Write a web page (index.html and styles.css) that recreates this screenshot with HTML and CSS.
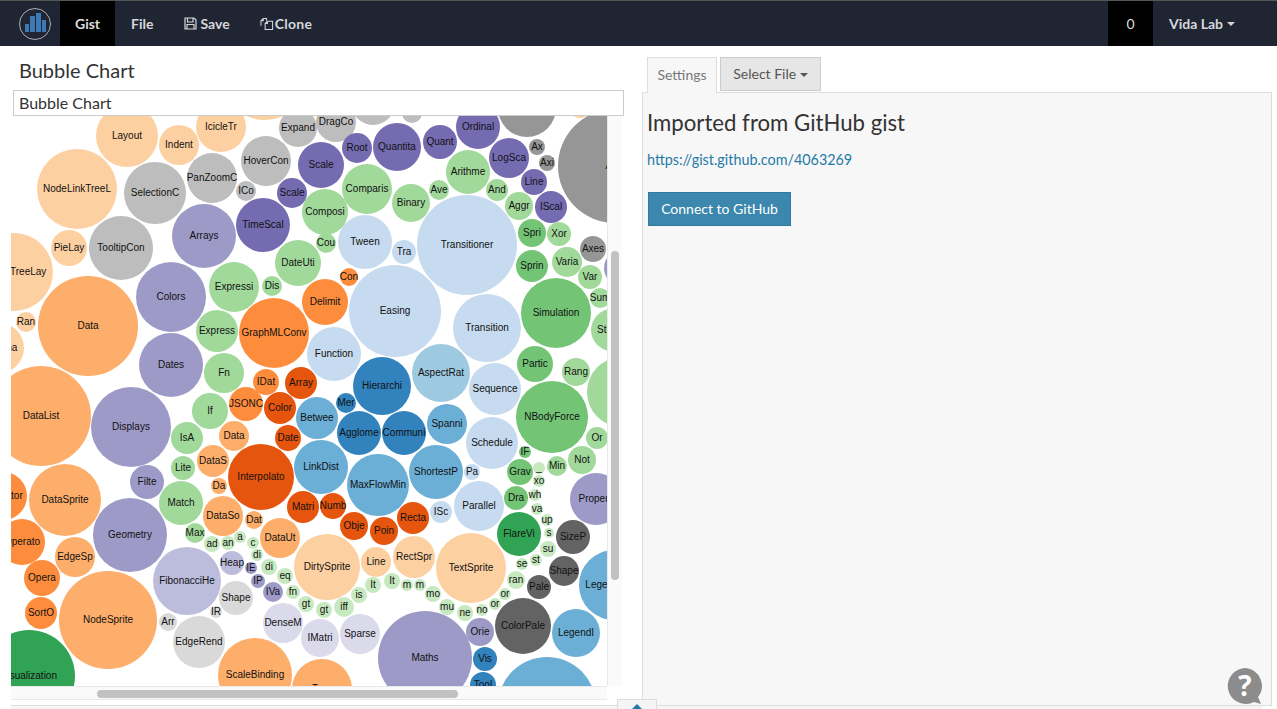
FILE: index.html
```html
<!DOCTYPE html>
<html lang="en">
<head>
    <meta charset="UTF-8">
    <title>Bubble Chart</title>
    <link rel="stylesheet" href="styles.css">
</head>
<body>

<nav class="navbar">
    <a class="logo" href="#">
        <svg width="34" height="34" viewBox="0 0 34 34">
            <circle cx="17" cy="17" r="15.5" fill="none" stroke="#a9adb3" stroke-width="1"></circle>
            <rect x="7" y="17" width="4" height="8" fill="#3d7ab5"></rect>
            <rect x="12" y="9" width="5" height="16" fill="#3d7ab5"></rect>
            <rect x="18" y="6" width="5" height="19" fill="#3d7ab5"></rect>
            <rect x="24" y="13" width="4" height="12" fill="#3d7ab5"></rect>
        </svg>
    </a>
    <a class="nav-item active" href="#">Gist</a>
    <a class="nav-item" href="#">File</a>
    <a class="nav-item" href="#">
        <svg class="nav-icon" width="13" height="13" viewBox="0 0 13 13">
            <path d="M1 1h9l2 2v9H1z M3.5 1.5v3.5h5.5V1.5 M3 12V7.5h7V12" fill="none" stroke="#d5d7da" stroke-width="1.2"></path>
        </svg>Save
    </a>
    <a class="nav-item clone" href="#">
        <svg class="nav-icon clone-icon" width="14" height="14" viewBox="0 0 15 14">
            <path d="M1 9V3.5L3.5 1H7v2.5 M1 3.5h2.5V1 M5.5 13V6.5L8 4h5.5v9z M5.5 6.5H8V4" fill="none" stroke="#d5d7da" stroke-width="1.1"></path>
        </svg>Clone
    </a>
    <div class="nav-right">
        <span class="counter">0</span>
        <a class="user-menu" href="#">Vida Lab <span class="caret"></span></a>
    </div>
</nav>

<div class="main">
    <div class="left-col">
        <h3 class="title">Bubble Chart</h3>
        <input class="title-input" type="text" value="Bubble Chart">
        <div class="chart-area">
            <svg id="chart" class="chart" width="596" height="570" viewBox="11 116 596 570"></svg>
            <div class="vscroll"><div class="vthumb"></div></div>
            <div class="hscroll"><div class="hthumb"></div></div>
        </div>
    </div>
    <div class="right-col">
        <div class="tabs">
            <a class="tab" href="#">Settings</a>
            <button class="select-file">Select File <span class="caret"></span></button>
        </div>
        <div class="panel">
            <h3 class="panel-title">Imported from GitHub gist</h3>
            <p class="panel-link"><a href="#">https://gist.github.com/4063269</a></p>
            <button class="connect">Connect to GitHub</button>
        </div>
    </div>
</div>

<div class="console-bar">
    <div class="console-tab"><span class="caret-up"></span></div>
</div>

<div class="help">
    <svg width="40" height="40" viewBox="0 0 40 40">
        <path d="M20 2a18 18 0 1 0 8 34l7 2-3-7A18 18 0 0 0 20 2z" fill="#8c8c8c"></path>
    </svg>
    <span class="help-mark">?</span>
</div>

<script src="app.js"></script>
</body>
</html>
```

FILE: styles.css
```css
html, body {
    height: 100%;
}
body {
    font-family: Lato, "Open Sans", sans-serif;
    margin: 0;
    background-color: #fff;
    color: #333;
    height: 709px;
    overflow: hidden;
    position: relative;
}
a {
    text-decoration: none;
}

/* top bar */
.navbar {
    display: flex;
    height: 45px;
    background-color: #1f2533;
    border-top: 1px solid #555;
    font-size: 14px;
    font-weight: 700;
}
.logo {
    width: 60px;
    display: flex;
    align-items: center;
    padding-left: 18px;
    box-sizing: border-box;
}
.nav-item {
    display: flex;
    align-items: center;
    padding: 0 15px 0 16px;
    color: #d5d7da;
}
.nav-item.active {
    background-color: #000;
    padding: 0 15px;
    color: #ddd;
}
.nav-item.clone {
    padding-left: 15px;
    letter-spacing: 0.3px;
}
.nav-icon {
    margin-right: 3px;
}
.clone-icon {
    margin-right: 1px;
}
.nav-right {
    margin-left: auto;
    display: flex;
    font-weight: 400;
}
.counter {
    width: 45px;
    background-color: #000;
    color: #ddd;
    display: flex;
    align-items: center;
    justify-content: center;
}
.user-menu {
    display: flex;
    align-items: center;
    gap: 4px;
    width: 124px;
    padding-left: 16px;
    box-sizing: border-box;
    color: #d5d7da;
    font-weight: 700;
}
.caret {
    display: inline-block;
    border-top: 4px solid currentColor;
    border-left: 4px solid transparent;
    border-right: 4px solid transparent;
    vertical-align: middle;
}

/* main columns */
.main {
    display: flex;
    height: 659px;
}
.left-col {
    width: 642px;
    flex-shrink: 0;
    padding-left: 11px;
    box-sizing: border-box;
}
.title {
    font-size: 20px;
    font-weight: 400;
    line-height: 24px;
    margin: 12px 0 8px 8px;
}
.title-input {
    display: block;
    width: 611px;
    height: 26px;
    margin-left: 2px;
    box-sizing: border-box;
    border: 1px solid #ccc;
    padding: 0 5px 2px;
    font-family: inherit;
    font-size: 16px;
    color: #333;
}
.chart-area {
    display: grid;
    grid-template-columns: 596px 15px;
    grid-template-rows: 570px 14px;
}
.chart {
    display: block;
    background-color: #fff;
}
.chart text {
    font-family: "Liberation Sans", Arial, sans-serif;
    font-size: 10px;
    text-anchor: middle;
    fill: #111;
}
.vscroll {
    background-color: #fafafa;
    border-left: 1px solid #e8e8e8;
    box-sizing: border-box;
    padding: 135px 0 0 3px;
}
.vthumb {
    width: 8px;
    height: 329px;
    border-radius: 4px;
    background-color: #c1c1c1;
}
.hscroll {
    background-color: #fafafa;
    border-top: 1px solid #e8e8e8;
    border-bottom: 1px solid #e8e8e8;
    box-sizing: border-box;
    padding: 3px 0 0 86px;
}
.hthumb {
    width: 361px;
    height: 8px;
    border-radius: 4px;
    background-color: #c1c1c1;
}

/* right side */
.right-col {
    width: 630px;
    padding-top: 11px;
    box-sizing: border-box;
}
.tabs {
    display: flex;
    align-items: flex-start;
    gap: 3px;
    padding-left: 5px;
    height: 35px;
}
.tab {
    height: 36px;
    width: 70px;
    box-sizing: border-box;
    border: 1px solid #ddd;
    border-bottom: 0;
    background-color: #f7f7f7;
    color: #777;
    font-size: 14px;
    text-align: center;
    line-height: 33px;
    position: relative;
    z-index: 1;
}
.select-file {
    height: 34px;
    width: 101px;
    box-sizing: border-box;
    border: 1px solid #ccc;
    background-color: #e6e6e6;
    color: #555;
    font-family: inherit;
    font-size: 14px;
    padding: 0 0 2px;
}
.panel {
    height: 614px;
    box-sizing: border-box;
    border: 1px solid #ddd;
    background-color: #f7f7f7;
    padding: 0 4px;
}
.panel-title {
    font-size: 22.2px;
    font-weight: 400;
    line-height: 26px;
    margin: 17px 0 0;
}
.panel-link {
    font-size: 14.35px;
    line-height: 20px;
    margin: 14px 0 22px;
}
.panel-link a {
    color: #1f7ba8;
}
.connect {
    display: block;
    width: 143px;
    height: 34px;
    margin-left: 1px;
    box-sizing: border-box;
    border: 1px solid #2f7a9e;
    background-color: #3b87ad;
    color: #fff;
    font-family: inherit;
    font-size: 14px;
    padding: 0 0 2px;
}

/* bottom bar, sits over the page */
.console-bar {
    position: absolute;
    left: 11px;
    top: 705px;
    width: 1251px;
    height: 4px;
    background-color: #f5f5f5;
    border-top: 1px solid #ddd;
}
.console-tab {
    position: absolute;
    left: 606px;
    top: -7px;
    width: 40px;
    height: 10px;
    box-sizing: border-box;
    background-color: #f5f5f5;
    border: 1px solid #ddd;
    border-bottom: 0;
    display: flex;
    justify-content: center;
    padding-top: 4px;
}
.caret-up {
    width: 0;
    height: 0;
    border-bottom: 7px solid #1f7ba8;
    border-left: 7px solid transparent;
    border-right: 7px solid transparent;
}
.help {
    position: absolute;
    left: 1226px;
    top: 666px;
    width: 40px;
    height: 40px;
}
.help svg {
    display: block;
}
.help-mark {
    position: absolute;
    left: 0;
    top: 0;
    width: 38px;
    text-align: center;
    color: #fff;
    font-family: "Open Sans", sans-serif;
    font-weight: 700;
    font-size: 28px;
    line-height: 38px;
}
```

FILE: app.js
```js
// palette of the flare bubbles
const c = {
    o1: '#e6550d', o2: '#fd8d3c', o3: '#fdae6b', o4: '#fdd0a2',
    g1: '#31a354', g2: '#74c476', g3: '#a1d99b', g4: '#c7e9c0',
    b1: '#3182bd', b2: '#6baed6', b3: '#9ecae1', b4: '#c6dbef',
    p1: '#756bb1', p2: '#9e9ac8', p3: '#bcbddc', p4: '#dadaeb',
    k1: '#636363', k2: '#969696', k3: '#bdbdbd', k4: '#d9d9d9'
};

// x, y, r, colour, label
const bubbles = [
    [127, 136, 31, 'o4', 'Layout'], [179, 145, 20, 'o4', 'Indent'], [221, 127, 25, 'o4', 'IcicleTr'],
    [265, 75, 45, 'o4', ''], [580, 106, 12, 'o4', ''], [298, 128, 19, 'k3', 'Expand'],
    [266, 161, 25, 'k3', 'HoverCon'], [212, 178, 25, 'k3', 'PanZoomC'], [77, 189, 40, 'o4', 'NodeLinkTreeL'],
    [155, 193, 31, 'k3', 'SelectionC'], [246, 191, 10, 'k3', 'ICo'], [292, 193, 15, 'p1', 'Scale'],
    [321, 165, 23, 'p1', 'Scale'], [204, 236, 32, 'p2', 'Arrays'], [263, 225, 27, 'p1', 'TimeScal'],
    [325, 212, 23, 'g3', 'Composi'], [69, 248, 18, 'o4', 'PieLay'], [121, 248, 32, 'k3', 'TooltipCon'],
    [14, 272, 39, 'o4', 'RadialTreeLay'], [171, 297, 35, 'p2', 'Colors'], [298, 263, 23, 'g3', 'DateUti'],
    [234, 287, 25, 'g3', 'Expressi'], [272, 286, 10, 'g3', 'Dis'], [326, 243, 10, 'g3', 'Cou'],
    [88, 326, 50, 'o3', 'Data'], [26, 322, 10, 'o4', 'Ran'], [-1, 348, 25, 'o4', 'Schema'],
    [41, 416, 50, 'o3', 'DataList'], [131, 427, 40, 'p2', 'Displays'], [171, 365, 32, 'p2', 'Dates'],
    [217, 331, 21, 'g3', 'Express'], [274, 333, 35, 'o2', 'GraphMLConv'], [224, 373, 20, 'g3', 'Fn'],
    [266, 382, 13, 'o2', 'IDat'], [301, 383, 16, 'o1', 'Array'], [210, 411, 18, 'g3', 'If'],
    [246, 404, 17, 'o2', 'JSONC'], [280, 408, 16, 'o1', 'Color'], [317, 418, 21, 'b2', 'Betwee'],
    [187, 438, 16, 'g3', 'IsA'], [234, 436, 15, 'o3', 'Data'], [288, 438, 13, 'o1', 'Date'],
    [183, 468, 12, 'g3', 'Lite'], [213, 461, 16, 'o3', 'DataS'], [261, 477, 33, 'o1', 'Interpolato'],
    [219, 486, 8, 'o3', 'Da'], [147, 482, 17, 'p2', 'Filte'], [181, 503, 22, 'g3', 'Match'],
    [65, 500, 36, 'o3', 'DataSprite'], [3, 496, 24, 'o2', 'Operator'], [22, 542, 23, 'o2', 'Operato'],
    [130, 535, 37, 'p2', 'Geometry'], [223, 516, 20, 'o3', 'DataSo'], [254, 520, 9, 'o3', 'Dat'],
    [195, 533, 10, 'g3', 'Max'], [280, 538, 20, 'o3', 'DataUt'], [212, 544, 8, 'g4', 'ad'],
    [228, 543, 7, 'g4', 'an'], [240, 537, 6, 'g4', 'a'], [253, 543, 6, 'g4', 'c'],
    [75, 557, 20, 'o3', 'EdgeSp'], [42, 578, 18, 'o2', 'Opera'], [41, 613, 16, 'o2', 'SortO'],
    [187, 581, 34, 'p3', 'FibonacciHe'], [232, 563, 12, 'p3', 'Heap'], [251, 568, 6, 'p2', 'IE'],
    [257, 555, 6, 'g4', 'di'], [269, 567, 8, 'g4', 'di'], [258, 581, 7, 'p2', 'IP'],
    [285, 576, 8, 'g4', 'eq'], [293, 592, 7, 'g4', 'fn'], [273, 592, 10, 'p2', 'IVa'],
    [236, 598, 17, 'k4', 'Shape'], [216, 612, 6, 'k4', 'IR'], [168, 622, 9, 'k4', 'Arr'],
    [306, 604, 8, 'g4', 'gt'], [108, 620, 49, 'o3', 'NodeSprite'], [199, 642, 26, 'k4', 'EdgeRend'],
    [283, 623, 20, 'p4', 'DenseM'], [320, 638, 19, 'p4', 'IMatri'], [255, 675, 37, 'o3', 'ScaleBinding'],
    [29, 676, 46, 'g1', 'Visualization'], [336, 122, 20, 'k3', 'DragCo'], [373, 103, 22, 'k3', ''],
    [412, 113, 10, 'k3', ''], [357, 148, 15, 'p1', 'Root'], [397, 147, 24, 'p1', 'Quantita'],
    [440, 142, 17, 'p1', 'Quant'], [478, 127, 22, 'p1', 'Ordinal'], [527, 108, 29, 'k2', ''],
    [537, 147, 8, 'k2', 'Ax'], [547, 163, 8, 'k2', 'Axi'], [509, 158, 20, 'p1', 'LogSca'],
    [615, 166, 57, 'k2', 'Axis'], [468, 172, 22, 'g3', 'Arithme'], [534, 182, 13, 'p1', 'Line'],
    [497, 190, 11, 'g3', 'And'], [367, 189, 25, 'g3', 'Comparis'], [439, 190, 10, 'g3', 'Ave'],
    [411, 203, 19, 'g3', 'Binary'], [519, 206, 14, 'g3', 'Aggr'], [551, 207, 16, 'p1', 'IScal'],
    [365, 242, 27, 'b4', 'Tween'], [404, 252, 12, 'b4', 'Tra'], [467, 245, 50, 'b4', 'Transitioner'],
    [532, 233, 14, 'g2', 'Spri'], [559, 234, 12, 'g3', 'Xor'], [593, 249, 13, 'k2', 'Axes'],
    [567, 262, 15, 'g3', 'Varia'], [532, 266, 16, 'g2', 'Sprin'], [590, 277, 12, 'g3', 'Var'],
    [600, 298, 10, 'g3', 'Sum'], [622, 268, 18, 'p2', ''], [349, 277, 9, 'o2', 'Con'],
    [325, 302, 23, 'o2', 'Delimit'], [395, 311, 46, 'b4', 'Easing'], [487, 328, 34, 'b4', 'Transition'],
    [556, 313, 35, 'g2', 'Simulation'], [612, 330, 21, 'g3', 'Stacks'], [334, 354, 27, 'b4', 'Function'],
    [441, 373, 29, 'b3', 'AspectRat'], [382, 386, 29, 'b1', 'Hierarchi'], [535, 364, 18, 'g2', 'Partic'],
    [576, 372, 14, 'g3', 'Rang'], [622, 392, 35, 'g3', ''], [495, 389, 26, 'b4', 'Sequence'],
    [346, 403, 10, 'b1', 'Mer'], [552, 417, 36, 'g2', 'NBodyForce'], [447, 424, 20, 'b2', 'Spanni'],
    [359, 433, 22, 'b1', 'Agglome'], [404, 433, 22, 'b1', 'Communi'], [492, 443, 26, 'b4', 'Schedule'],
    [597, 438, 11, 'g3', 'Or'], [525, 452, 6, 'g2', 'IF'], [582, 460, 14, 'g3', 'Not'],
    [557, 466, 10, 'g3', 'Min'], [539, 468, 6, 'g4', '_'], [520, 472, 13, 'g2', 'Grav'],
    [321, 467, 27, 'b2', 'LinkDist'], [378, 485, 31, 'b2', 'MaxFlowMin'], [436, 472, 27, 'b2', 'ShortestP'],
    [472, 472, 8, 'b4', 'Pa'], [539, 481, 6, 'g4', 'xo'], [535, 495, 6, 'g4', 'wh'],
    [516, 498, 12, 'g2', 'Dra'], [479, 506, 25, 'b4', 'Parallel'], [596, 499, 26, 'p2', 'Properti'],
    [303, 507, 16, 'o1', 'Matri'], [333, 506, 13, 'o1', 'Numb'], [413, 518, 16, 'o1', 'Recta'],
    [441, 512, 11, 'b4', 'ISc'], [537, 509, 6, 'g4', 'va'], [354, 526, 14, 'o1', 'Obje'],
    [384, 531, 14, 'o1', 'Poin'], [547, 520, 6, 'g4', 'up'], [519, 534, 22, 'g1', 'FlareVi'],
    [549, 533, 5, 'g4', 's'], [573, 537, 17, 'k1', 'SizeP'], [548, 549, 8, 'g4', 'su'],
    [376, 562, 15, 'o4', 'Line'], [414, 557, 21, 'o4', 'RectSpr'], [327, 567, 33, 'o4', 'DirtySprite'],
    [471, 568, 35, 'o4', 'TextSprite'], [536, 560, 6, 'g4', 'st'], [522, 564, 6, 'g4', 'se'],
    [564, 571, 15, 'k1', 'Shape'], [516, 580, 9, 'g4', 'ran'], [539, 587, 12, 'k1', 'Pale'],
    [614, 585, 35, 'b2', 'LegendRang'], [373, 585, 8, 'g4', 'It'], [392, 581, 8, 'g4', 'It'],
    [407, 585, 6, 'g4', 'm'], [420, 585, 6, 'g4', 'm'], [433, 594, 8, 'g4', 'mo'],
    [359, 595, 8, 'g4', 'is'], [505, 594, 6, 'g4', 'or'], [495, 604, 6, 'g4', 'or'],
    [447, 607, 8, 'g4', 'mu'], [482, 610, 6, 'g4', 'no'], [465, 613, 8, 'g4', 'ne'],
    [324, 610, 8, 'g4', 'gt'], [344, 607, 10, 'g4', 'iff'], [360, 634, 20, 'p4', 'Sparse'],
    [523, 626, 28, 'k1', 'ColorPale'], [576, 633, 24, 'b2', 'LegendI'], [480, 632, 14, 'p2', 'Orie'],
    [425, 658, 47, 'p2', 'Maths'], [485, 659, 12, 'b1', 'Vis'], [483, 685, 13, 'b1', 'Tool'],
    [547, 706, 49, 'b2', ''], [322, 689, 30, 'o3', 'Tree']
];

const svg = document.getElementById('chart');
const NS = 'http://www.w3.org/2000/svg';

bubbles.forEach(([x, y, r, colour, label]) => {
    const circle = document.createElementNS(NS, 'circle');
    circle.setAttribute('cx', x);
    circle.setAttribute('cy', y);
    circle.setAttribute('r', r);
    circle.setAttribute('fill', c[colour]);
    svg.appendChild(circle);

    if (label) {
        const text = document.createElementNS(NS, 'text');
        text.setAttribute('x', x);
        text.setAttribute('y', y + 3);
        text.textContent = label;
        svg.appendChild(text);
    }
});
```
